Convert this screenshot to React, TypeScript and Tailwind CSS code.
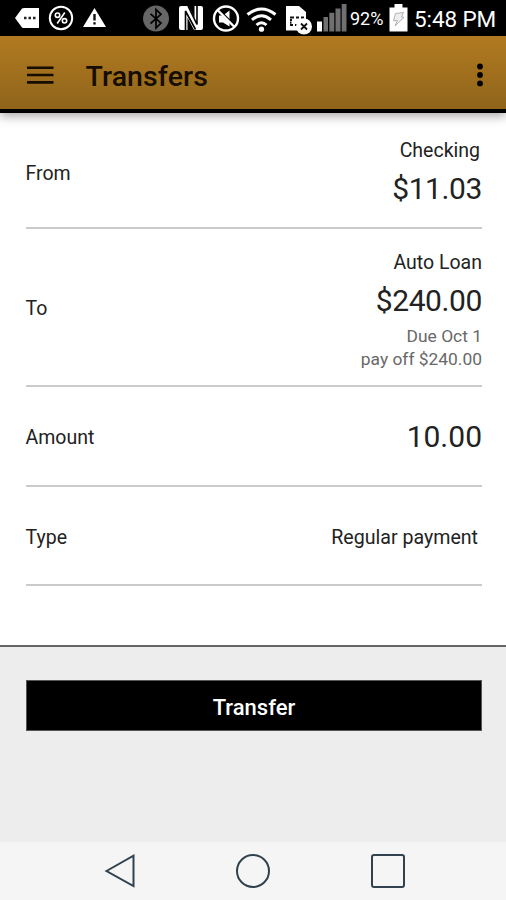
import type { ReactNode } from "react"

function StatusBar() {
  return (
    <div className="flex h-9 items-start bg-black text-white">
      {/* Notifications */}
      <svg className="ml-[14px] h-9 w-[26px] shrink-0" viewBox="14 0 26 36">
        <path d="M15 18 L22 8.5 Q23 8 24 8 H39 V28 H24 Q23 28 22 27.5 Z" fill="#fff" />
        <path d="M24 18h2.5M28.5 18h2.5M33 18h2.5" stroke="#222" strokeWidth="2.4" />
      </svg>
      <svg className="ml-[7px] h-9 w-7 shrink-0" viewBox="47 0 28 36" fill="none" stroke="#fff">
        <circle cx="61" cy="18" r="11.2" strokeWidth="2" />
        <circle cx="57.5" cy="15.2" r="2.2" strokeWidth="1.6" />
        <circle cx="64.5" cy="20.8" r="2.2" strokeWidth="1.6" />
        <path d="M64.8 12.5 L57.2 23.5" strokeWidth="1.6" />
      </svg>
      <svg className="ml-[7px] h-9 w-[26px] shrink-0" viewBox="82 0 26 36">
        <path d="M94.5 8 L106 27 H83 Z" fill="#fff" />
        <path d="M94.5 14v6.5M94.5 22.3v2.3" stroke="#111" strokeWidth="2.4" />
      </svg>

      {/* Device state */}
      <svg className="ml-[34px] h-9 w-7 shrink-0" viewBox="142 0 28 36">
        <circle cx="156" cy="18.6" r="13" fill="#666" />
        <path d="M150.5 13.8 L161 23 L156 28 V9.5 L161 14.3 L150.5 23.5" fill="none" stroke="#000" strokeWidth="1.7" />
      </svg>
      <svg className="ml-[8px] h-9 w-[26px] shrink-0" viewBox="178 0 26 36">
        <path d="M179 8 Q179 6 181 6 H188.5 L194.5 18 V6 H201 Q203 6 203 8 V28 Q203 30 201 30 H194 L187.5 17.5 V30 H181 Q179 30 179 28 Z" fill="#fff" />
        <path d="M185.5 30V11L195.5 29.5" fill="none" stroke="#000" strokeWidth="1.6" />
        <path d="M188 6L197 24.5V6" fill="none" stroke="#000" strokeWidth="1.6" />
      </svg>
      <svg className="ml-[8px] h-9 w-7 shrink-0" viewBox="212 0 28 36">
        <path d="M219 15.5h4l6.5-5v16l-6.5-4h-4z" fill="#fff" />
        <path d="M218 9.5 L236 27.5" stroke="#000" strokeWidth="3" />
        <circle cx="226" cy="18.5" r="12" fill="none" stroke="#fff" strokeWidth="2.4" />
        <path d="M217.5 10 L234.5 27" stroke="#fff" strokeWidth="2.4" />
      </svg>
      <svg className="ml-[6px] h-9 w-8 shrink-0" viewBox="246 0 32 36" fill="none" stroke="#fff" strokeWidth="3">
        <path d="M247.5 14.5 Q261.5 3.5 275.5 14.5" />
        <path d="M252 19.8 Q261.5 11.8 271 19.8" />
        <path d="M256.5 25 Q261.5 20.5 266.5 25" />
        <circle cx="261.5" cy="29.2" r="2.6" fill="#fff" stroke="none" />
      </svg>
      <svg className="ml-[7px] h-9 w-[30px] shrink-0" viewBox="285 0 30 36">
        <path d="M286 6 H299 L306 12 V30.5 H286 Z" fill="#fff" />
        <path d="M290 17.5h4M296 17.5h3M301 17.5h3M290 20h2M290 25h3M295 25h3M290 22.7h1.5" stroke="#111" strokeWidth="2.2" />
        <circle cx="304" cy="26.5" r="8" fill="#fff" />
        <path d="M301 23.5l6 6M307 23.5l-6 6" stroke="#111" strokeWidth="1.8" />
      </svg>
      <svg className="ml-[1px] h-9 w-8 shrink-0" viewBox="316 0 32 36" fill="#707070">
        <rect x="317" y="21.5" width="5" height="10" fill="#fff" />
        <rect x="323.5" y="17" width="4.5" height="14.5" />
        <rect x="329.3" y="12.8" width="5" height="18.7" />
        <rect x="335.5" y="8.5" width="5" height="23" />
        <rect x="341.7" y="4" width="4.8" height="27.5" />
      </svg>
      <span className="ml-[2px] w-[36px] text-[18px] leading-[37px] whitespace-nowrap">92%</span>
      <svg className="ml-[3px] h-9 w-5 shrink-0" viewBox="389 0 20 36">
        <path d="M394.5 4h8v3.5h5V31.5h-18V7.5h5z" fill="#fff" />
        <path d="M395.5 13.5 L403.5 12.5 L401.5 17 L404 17.3 L395 26 L397.3 20.5 L393.5 20.8 Z" fill="#eee" stroke="#aaa" strokeWidth="0.9" />
      </svg>
      <span className="ml-[5px] text-[22.5px] leading-[38px] tracking-[-0.1px] whitespace-nowrap">5:48 PM</span>
    </div>
  )
}

function Header() {
  return (
    <header className="relative flex h-[77px] items-center border-b-4 border-black bg-gradient-to-b from-[#b27a20] to-[#8f651b] pr-[21px] pl-[27px] text-[#140d00] shadow-[0_3px_10px_rgba(0,0,0,0.35)]">
      <svg className="mt-1 h-5 w-[27px]" viewBox="0 0 27 20" stroke="currentColor" strokeWidth="2.6">
        <path d="M0 2.8h26.5M0 10h26.5M0 17.4h26.5" />
      </svg>
      <h1 className="mt-[8px] ml-[31.5px] text-[28.5px] leading-8 font-medium tracking-[0.1px]">Transfers</h1>
      <svg className="mt-1 ml-auto h-6 w-[10px]" viewBox="0 0 10 24" fill="#000">
        <circle cx="5" cy="3.5" r="2.9" />
        <circle cx="5" cy="12" r="2.9" />
        <circle cx="5" cy="20.4" r="2.9" />
      </svg>
    </header>
  )
}

function Row({ label, className, children }: { label: string; className: string; children: ReactNode }) {
  return (
    <div className={`flex items-center justify-between border-b-2 border-[#cbcbcb] ${className}`}>
      <span className="mt-[2px] text-[19.5px] leading-6">{label}</span>
      <div className="flex flex-col items-end whitespace-nowrap">{children}</div>
    </div>
  )
}

export default function App() {
  return (
    <div className="flex h-[900px] w-[506px] flex-col overflow-hidden bg-white font-['Roboto',sans-serif] text-[#222]">
      <StatusBar />
      <Header />

      <main className="h-[532px] pr-[24px] pl-[25.5px]">
        <Row label="From" className="h-[116px] pt-[5px]">
          <span className="mr-[2px] text-[19.5px] leading-6">Checking</span>
          <span className="mt-[8px] text-[30px] leading-9 tracking-[-0.4px]">$11.03</span>
        </Row>
        <Row label="To" className="h-[158px] pt-[2px]">
          <span className="mt-[6px] text-[19.5px] leading-6">Auto Loan</span>
          <span className="mt-[8px] text-[30px] leading-9 tracking-[-0.4px]">$240.00</span>
          <span className="mt-[6px] text-[17.4px] leading-[23px] text-[#686868]">Due Oct 1</span>
          <span className="text-[17.4px] leading-[23px] text-[#686868]">pay off $240.00</span>
        </Row>
        <Row label="Amount" className="h-[100px] pt-[2px]">
          <span className="text-[30px] leading-9">10.00</span>
        </Row>
        <Row label="Type" className="h-[99px] pt-[2px]">
          <span className="mt-[2px] mr-[4px] text-[19.6px] leading-6">Regular payment</span>
        </Row>
      </main>

      <div className="flex-1 border-t-2 border-[#666] bg-[#ededed] px-[26px] pt-[33px]">
        <button className="block h-[51px] w-[456px] border border-[#555] bg-black pt-[4px] text-[22px] font-medium text-white">
          Transfer
        </button>
      </div>

      <nav className="h-[58px] bg-[#f5f5f5]">
        <div className="flex h-full items-center justify-between pr-[100px] pl-[104px]">
          <svg className="h-9 w-8" viewBox="0 0 32 36" fill="none" stroke="#2f424e" strokeWidth="2">
            <path d="M2.5 18 L29.5 2.7 V33 Z" />
          </svg>
          <svg className="h-9 w-9" viewBox="0 0 36 36" fill="none" stroke="#2f424e" strokeWidth="2">
            <circle cx="18" cy="18" r="16" />
          </svg>
          <svg className="h-9 w-9" viewBox="0 0 36 36" fill="none" stroke="#2f424e" strokeWidth="2">
            <rect x="2" y="2" width="32" height="32" rx="2" />
          </svg>
        </div>
      </nav>
    </div>
  )
}
